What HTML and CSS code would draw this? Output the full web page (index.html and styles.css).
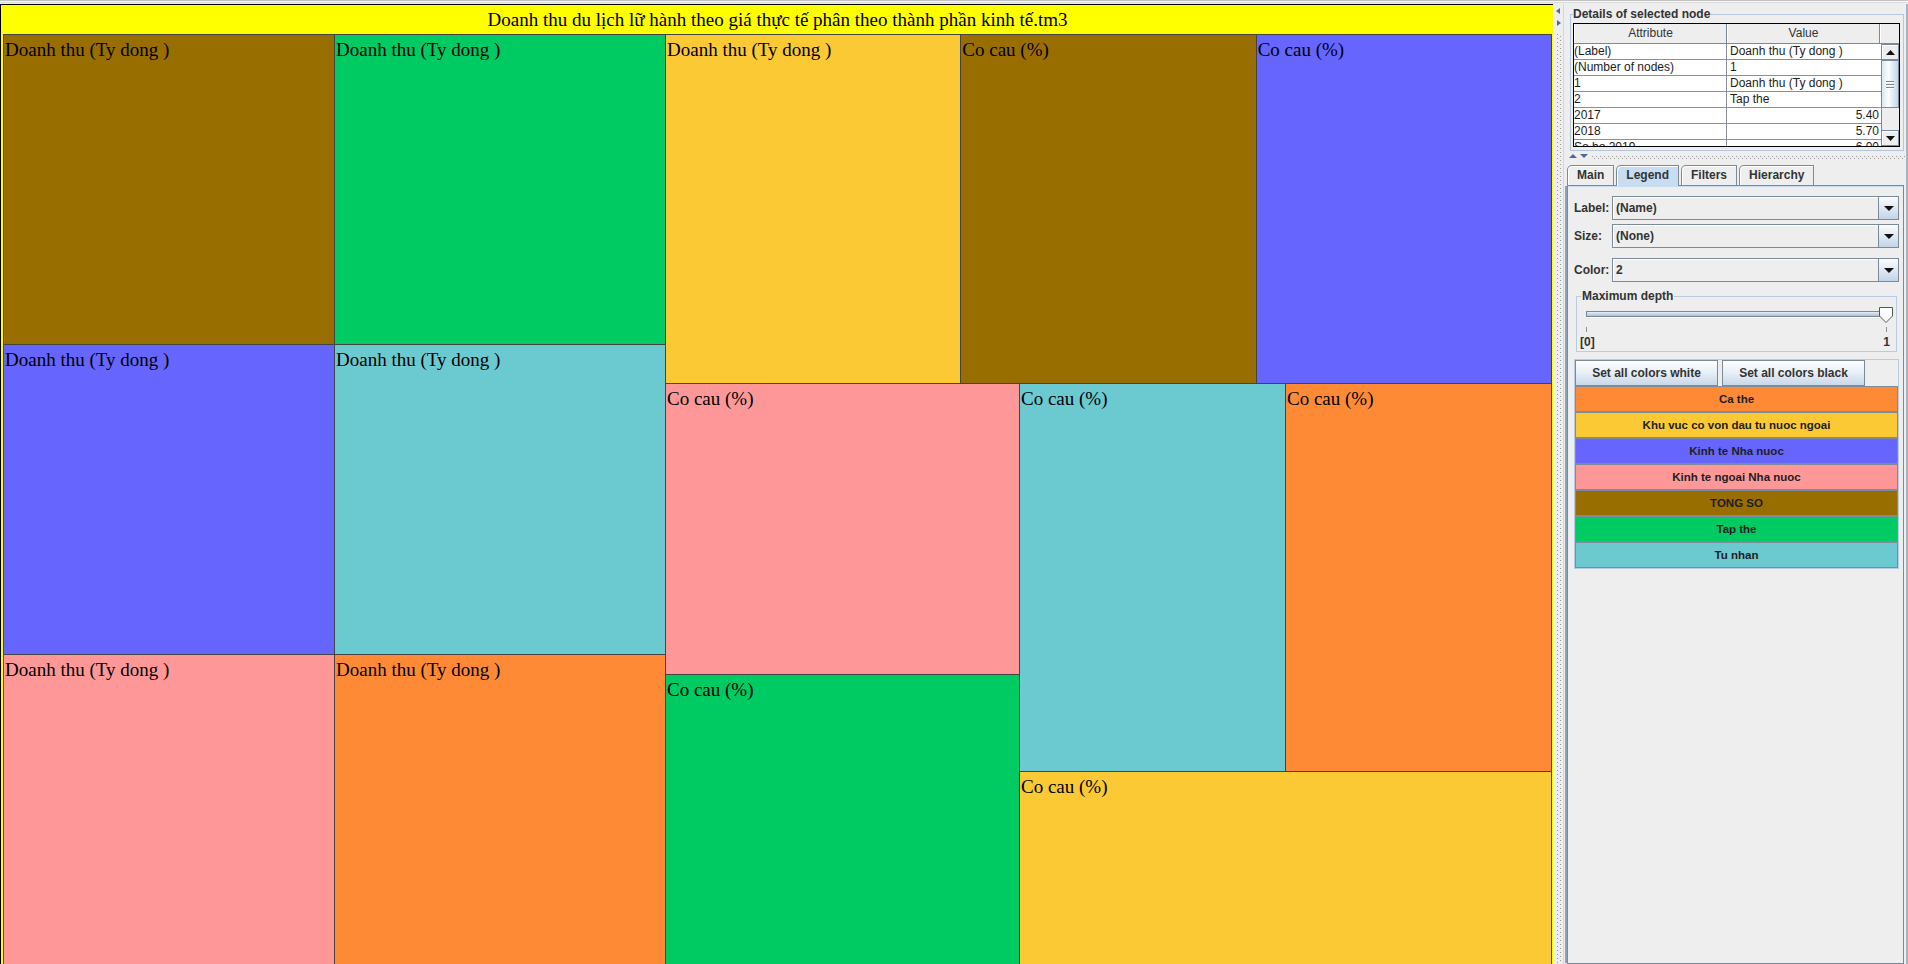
FILE: index.html
```html
<!DOCTYPE html>
<html lang="vi">
<head>
  <meta charset="UTF-8">
  <title>Treemap - Doanh thu du lịch lữ hành</title>
  <link rel="stylesheet" href="styles.css">
</head>
<body>
<div class="app">

  <!-- treemap view -->
  <div class="viewer">
    <div class="viewer-title">Doanh thu du lịch lữ hành theo giá thực tế phân theo thành phần kinh tế.tm3</div>
    <div class="treemap">
      <div class="block-a">
        <div class="tm-row">
          <div class="cell c-brown">Doanh thu (Ty dong )</div>
          <div class="cell c-green">Doanh thu (Ty dong )</div>
        </div>
        <div class="tm-row">
          <div class="cell c-blue">Doanh thu (Ty dong )</div>
          <div class="cell c-cyan">Doanh thu (Ty dong )</div>
        </div>
        <div class="tm-row">
          <div class="cell c-pink">Doanh thu (Ty dong )</div>
          <div class="cell c-orange">Doanh thu (Ty dong )</div>
        </div>
      </div>
      <div class="block-b">
        <div class="strip">
          <div class="cell c-yellow">Doanh thu (Ty dong )</div>
          <div class="cell c-brown">Co cau (%)</div>
          <div class="cell c-blue">Co cau (%)</div>
        </div>
        <div class="rest">
          <div class="rest-left">
            <div class="cell c-pink pink-top">Co cau (%)</div>
            <div class="cell c-green">Co cau (%)</div>
          </div>
          <div class="rest-right">
            <div class="pair">
              <div class="cell c-cyan cyan-cell">Co cau (%)</div>
              <div class="cell c-orange">Co cau (%)</div>
            </div>
            <div class="cell c-yellow">Co cau (%)</div>
          </div>
        </div>
      </div>
    </div>
  </div>

  <!-- split pane divider -->
  <div class="vsplit">
    <svg class="vsplit-arrows" width="5" height="20" viewBox="0 0 5 20">
      <polygon points="4,0 4,6 0,3" fill="#4d6a93"/>
      <polygon points="1,12 1,18 5,15" fill="#4d6a93"/>
    </svg>
  </div>

  <!-- control panel -->
  <div class="side">
    <fieldset class="details">
      <legend>Details of selected node</legend>
      <div class="grid-table">
        <div class="gt-head">
          <div class="th th-attr">Attribute</div>
          <div class="th th-val">Value</div>
          <div class="th corner"></div>
        </div>
        <div class="gt-body">
          <div class="gt-rows">
            <div class="tr"><span class="td td-attr">(Label)</span><span class="td">Doanh thu (Ty dong )</span></div>
            <div class="tr"><span class="td td-attr">(Number of nodes)</span><span class="td">1</span></div>
            <div class="tr"><span class="td td-attr">1</span><span class="td">Doanh thu (Ty dong )</span></div>
            <div class="tr"><span class="td td-attr">2</span><span class="td">Tap the</span></div>
            <div class="tr"><span class="td td-attr">2017</span><span class="td num">5.40</span></div>
            <div class="tr"><span class="td td-attr">2018</span><span class="td num">5.70</span></div>
            <div class="tr"><span class="td td-attr">So bo 2019</span><span class="td num">6.00</span></div>
          </div>
          <div class="vscroll">
            <div class="sb-btn">
              <svg width="9" height="5" viewBox="0 0 9 5"><polygon points="0,5 9,5 4.5,0" fill="#111"/></svg>
            </div>
            <div class="sb-thumb"><span></span><span></span><span></span></div>
            <div class="sb-track"></div>
            <div class="sb-btn">
              <svg width="9" height="5" viewBox="0 0 9 5"><polygon points="0,0 9,0 4.5,5" fill="#111"/></svg>
            </div>
          </div>
        </div>
      </div>
    </fieldset>

    <div class="hsplit">
      <svg class="hsplit-arrows" width="20" height="5" viewBox="0 0 20 5">
        <polygon points="0,4 8,4 4,0" fill="#4d6a93"/>
        <polygon points="11,0 19,0 15,4" fill="#4d6a93"/>
      </svg>
    </div>

    <div class="tabs">
      <div class="tab">Main</div>
      <div class="tab active">Legend</div>
      <div class="tab">Filters</div>
      <div class="tab">Hierarchy</div>
    </div>

    <div class="tab-body">
      <div class="field">
        <span class="field-label">Label:</span>
        <div class="combo"><span class="combo-text">(Name)</span><span class="combo-btn"></span></div>
      </div>
      <div class="field">
        <span class="field-label">Size:</span>
        <div class="combo"><span class="combo-text">(None)</span><span class="combo-btn"></span></div>
      </div>
      <div class="field field-color">
        <span class="field-label">Color:</span>
        <div class="combo"><span class="combo-text">2</span><span class="combo-btn"></span></div>
      </div>

      <fieldset class="depth">
        <legend>Maximum depth</legend>
        <div class="slider">
          <div class="track"></div>
          <svg class="thumb" width="14" height="16" viewBox="0 0 14 16">
            <polygon points="0.5,0.5 13.5,0.5 13.5,9 7,15.5 0.5,9" fill="#fafcfe" stroke="#555"/>
          </svg>
          <div class="ticks"><span></span><span></span></div>
          <div class="slider-labels"><span>[0]</span><span>1</span></div>
        </div>
      </fieldset>

      <div class="legend-panel">
        <div class="legend-buttons">
          <div class="btn">Set all colors white</div>
          <div class="btn">Set all colors black</div>
        </div>
        <div class="legend-row c-orange">Ca the</div>
        <div class="legend-row c-yellow">Khu vuc co von dau tu nuoc ngoai</div>
        <div class="legend-row c-blue">Kinh te Nha nuoc</div>
        <div class="legend-row c-pink">Kinh te ngoai Nha nuoc</div>
        <div class="legend-row c-brown">TONG SO</div>
        <div class="legend-row c-green">Tap the</div>
        <div class="legend-row c-cyan">Tu nhan</div>
      </div>
    </div>
  </div>

</div>
</body>
</html>
```

FILE: styles.css
```css
* {
  box-sizing: border-box;
}

body {
  margin: 0;
  padding-top: 4px;
  height: 964px;
  overflow: hidden;
  font-family: "Liberation Sans", Arial, sans-serif;
  font-size: 12px;
  color: #333;
  background:
    linear-gradient(to bottom, #c3c3c3 0 1px, #f7f7f7 1px 2px, #dcdcdc 2px 3px, #eeeeee 3px 4px) top/100% 4px no-repeat,
    #eeeeee;
}

.app {
  display: flex;
  height: 960px;
}

/* colours used by both the map and the legend */
.c-brown { background: #996e00; }
.c-green { background: #00cb63; }
.c-yellow { background: #fbc934; }
.c-blue { background: #6666ff; }
.c-cyan { background: #6bc9d0; }
.c-pink { background: #fe9898; }
.c-orange { background: #fe8a35; }

/* ---------- treemap ---------- */

.viewer {
  width: 1553px;
  flex: none;
  height: 100%;
  overflow: hidden;
  background: #ffff00;
  border-top: 1px solid #000;
  border-left: 1px solid #000;
  padding: 0 1px 0 2px;
}

.viewer-title {
  height: 29px;
  line-height: 29px;
  text-align: center;
  font-family: "Liberation Serif", "Times New Roman", serif;
  font-size: 19px;
  color: #000;
}

.treemap {
  width: 1549px;
  height: 931px;
  padding: 1px;
  background: #444;
  display: flex;
  gap: 1px;
}

.block-a {
  width: 661px;
  flex: none;
  display: flex;
  flex-direction: column;
  gap: 1px;
}

.tm-row {
  flex: 1;
  display: flex;
  gap: 1px;
  min-height: 0;
}

.block-b {
  flex: 1;
  display: flex;
  flex-direction: column;
  gap: 1px;
  min-width: 0;
}

.strip {
  height: 348px;
  flex: none;
  display: flex;
  gap: 1px;
}

.rest {
  flex: 1;
  display: flex;
  gap: 1px;
  min-height: 0;
}

.rest-left {
  width: 353px;
  flex: none;
  display: flex;
  flex-direction: column;
  gap: 1px;
}

.pink-top {
  flex: 0 0 290px;
}

.rest-right {
  flex: 1;
  display: flex;
  flex-direction: column;
  gap: 1px;
}

.pair {
  flex: 0 0 387px;
  display: flex;
  gap: 1px;
}

.cyan-cell {
  flex: 0 0 264px;
}

.cell {
  flex: 1;
  min-width: 0;
  min-height: 0;
  overflow: hidden;
  white-space: nowrap;
  padding: 4px 0 0 1px;
  font-family: "Liberation Serif", "Times New Roman", serif;
  font-size: 19px;
  line-height: 22px;
  color: #000;
}

/* ---------- dividers ---------- */

.vsplit {
  width: 10px;
  flex: none;
  position: relative;
  background:
    repeating-linear-gradient(to bottom, #9a9a9a 0 1px, transparent 1px 4px) 4px 30px / 1px 100% no-repeat,
    repeating-linear-gradient(to bottom, transparent 0 2px, #9a9a9a 2px 3px, transparent 3px 4px) 7px 30px / 1px 100% no-repeat,
    #eeeeee;
}

.vsplit-arrows {
  position: absolute;
  left: 3px;
  top: 4px;
}

.hsplit {
  height: 14px;
  position: relative;
  background:
    repeating-linear-gradient(to right, #9a9a9a 0 1px, transparent 1px 4px) 28px 5px / 100% 1px no-repeat,
    repeating-linear-gradient(to right, transparent 0 2px, #9a9a9a 2px 3px, transparent 3px 4px) 28px 7px / 100% 1px no-repeat;
}

.hsplit-arrows {
  position: absolute;
  left: 5px;
  top: 3px;
}

/* ---------- side panel ---------- */

.side {
  flex: 1;
  display: flex;
  flex-direction: column;
  border-left: 1px solid #d3d8df;
  border-right: 2px solid #a7b3c3;
  min-width: 0;
}

fieldset {
  margin: 0;
  min-width: 0;
}

legend {
  font-weight: bold;
  font-size: 12px;
  line-height: 16px;
  color: #333;
  padding: 0 1px;
}

.details {
  margin: 2px 2px 0 6px;
  padding: 1px 3px 3px 2px;
  border: 1px solid #b5c7dc;
}

.details legend {
  padding: 0;
}

.grid-table {
  border: 1px solid #000;
  height: 124px;
  display: flex;
  flex-direction: column;
  overflow: hidden;
  background: #fff;
}

.gt-head {
  display: flex;
  height: 20px;
  flex: none;
  border-bottom: 1px solid #7a8a99;
  background: #eeeeee;
}

.th {
  line-height: 18px;
  text-align: center;
  color: #333;
  border-right: 1px solid #7a8a99;
  border-left: 1px solid #fff;
}

.th-attr {
  width: 153px;
}

.th-val {
  flex: 1;
}

.corner {
  width: 19px;
  border-right: none;
}

.gt-body {
  flex: 1;
  display: flex;
  min-height: 0;
}

.gt-rows {
  flex: 1;
  min-width: 0;
}

.tr {
  display: flex;
  height: 16px;
  border-bottom: 1px solid #8a8f98;
}

.td {
  flex: 1;
  line-height: 15px;
  padding: 0 2px 0 3px;
  color: #1c1c1c;
  white-space: nowrap;
  overflow: hidden;
}

.td-attr {
  flex: none;
  width: 153px;
  padding-left: 0;
  border-right: 1px solid #8a8f98;
}

.num {
  text-align: right;
}

.vscroll {
  width: 18px;
  flex: none;
  display: flex;
  flex-direction: column;
  background: #eeeeee;
  border-left: 1px solid #7a8a99;
}

.sb-btn {
  height: 16px;
  flex: none;
  display: flex;
  align-items: center;
  justify-content: center;
  border: 1px solid #7a8a99;
  border-left: none;
  background: #eeeeee;
  box-shadow: inset 1px 1px 0 #fff;
}

.sb-thumb {
  height: 48px;
  flex: none;
  border: 1px solid #7a8a99;
  border-left: none;
  background: linear-gradient(to right, #d9e6f3, #fbfdff 40%, #c3d6ea);
  display: flex;
  flex-direction: column;
  align-items: center;
  justify-content: center;
  gap: 2px;
}

.sb-thumb span {
  width: 8px;
  height: 1px;
  background: #7a8a99;
  box-shadow: 0 1px 0 #fff;
}

.sb-track {
  flex: 1;
}

/* ---------- tabs ---------- */

.tabs {
  display: flex;
  gap: 2px;
  padding-left: 3px;
  height: 20px;
  flex: none;
  position: relative;
  z-index: 1;
}

.tab {
  height: 20px;
  padding: 0 9px;
  line-height: 18px;
  font-weight: bold;
  color: #333;
  background: #eeeeee;
  border: 1px solid #7a8a99;
  border-bottom: none;
  border-top-left-radius: 5px;
  box-shadow: inset 1px 1px 0 #fff;
}

.tab.active {
  background: #c8ddf2;
  height: 21px;
}

.tab-body {
  flex: 1;
  margin: 0 2px 0 3px;
  border: 1px solid #7a8a99;
  padding: 10px 4px 0 6px;
  box-shadow: -3px 0 0 -1px #8fa1ba, inset 0 1px 0 #c8ddf2;
}

.field {
  display: grid;
  grid-template-columns: 38px 1fr;
  align-items: center;
  height: 24px;
}

.field + .field {
  margin-top: 4px;
}

.field.field-color {
  margin-top: 10px;
}

.field-label {
  font-weight: bold;
  color: #333;
}

.combo {
  height: 24px;
  display: flex;
  border: 1px solid #7a8a99;
  background: #eeeeee;
  box-shadow: inset 1px 1px 0 #fff;
}

.combo-text {
  flex: 1;
  padding-left: 3px;
  line-height: 22px;
  font-weight: bold;
  color: #333;
}

.combo-btn {
  width: 20px;
  border-left: 1px solid #7a8a99;
  background:
    linear-gradient(to bottom, transparent 0 9px, transparent 9px),
    linear-gradient(to bottom, #fbfcfe, #dce7f2 55%, #c2d4e7);
  position: relative;
}

.combo-btn::after {
  content: "";
  position: absolute;
  left: 5px;
  top: 9px;
  border-left: 5px solid transparent;
  border-right: 5px solid transparent;
  border-top: 5px solid #111;
}

/* ---------- depth slider ---------- */

.depth {
  margin: 6px 2px 0 2px;
  padding: 0 4px 2px 4px;
  border: 1px solid #b8cbe0;
}

.slider {
  position: relative;
  margin: 0 5px;
  padding-top: 7px;
}

.track {
  height: 6px;
  border: 1px solid #7a8a99;
  background: linear-gradient(to bottom, #e6eef7, #a9bfd8);
  box-shadow: 0 1px 0 #fff;
}

.thumb {
  position: absolute;
  right: -6px;
  top: 3px;
}

.ticks {
  display: flex;
  justify-content: space-between;
  height: 5px;
  margin-top: 10px;
}

.ticks span {
  width: 1px;
  background: #8a9099;
}

.slider-labels {
  display: flex;
  justify-content: space-between;
  margin: 3px -3px 0 -6px;
  line-height: 14px;
  font-weight: bold;
  color: #333;
}

/* ---------- legend ---------- */

.legend-panel {
  margin-top: 7px;
  border: 1px solid #b8cbe0;
}

.legend-buttons {
  display: flex;
  gap: 4px;
}

.btn {
  width: 143px;
  height: 26px;
  line-height: 24px;
  text-align: center;
  font-weight: bold;
  color: #333;
  border: 1px solid #7a8a99;
  background: linear-gradient(to bottom, #ffffff, #e9f0f7 45%, #c9d8e8);
}

.legend-row {
  height: 26px;
  line-height: 24px;
  border: 1px solid #7d8b9c;
  text-align: center;
  font-weight: bold;
  font-size: 11.5px;
  color: #1e1e1e;
}
```
